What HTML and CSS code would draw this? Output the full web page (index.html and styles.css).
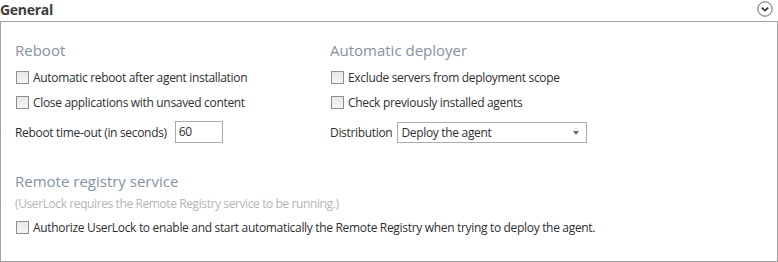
FILE: index.html
```html
<!DOCTYPE html>
<html>
<head>
<meta charset="utf-8">
<link rel="stylesheet" href="styles.css">
</head>
<body>
<div class="header">
  <span class="title">General</span>
  <svg class="toggle" width="16" height="16" viewBox="0 0 16 16">
    <circle cx="8" cy="8" r="7.2" fill="#fff" stroke="#6a6a6a" stroke-width="1"/>
    <path d="M4.8 6.6 L8 9.6 L11.2 6.6" fill="none" stroke="#333" stroke-width="1.8"/>
  </svg>
</div>
<div class="panel">
  <div class="columns">
    <div class="col col-left">
      <div class="heading">Reboot</div>
      <label class="check"><span class="box"></span>Automatic reboot after agent installation</label>
      <label class="check"><span class="box"></span>Close applications with unsaved content</label>
      <div class="field"><span class="label label-timeout">Reboot time-out (in seconds)</span><span class="input">60</span></div>
    </div>
    <div class="col">
      <div class="heading">Automatic deployer</div>
      <label class="check"><span class="box"></span>Exclude servers from deployment scope</label>
      <label class="check"><span class="box"></span>Check previously installed agents</label>
      <div class="field"><span class="label label-dist">Distribution</span><span class="select">Deploy the agent<span class="caret"></span></span></div>
    </div>
  </div>
  <div class="heading heading-remote">Remote registry service</div>
  <div class="note">(UserLock requires the Remote Registry service to be running.)</div>
  <label class="check check-remote"><span class="box"></span>Authorize UserLock to enable and start automatically the Remote Registry when trying to deploy the agent.</label>
</div>
</body>
</html>
```

FILE: styles.css
```css
html, body {
  margin: 0;
  padding: 0;
  background: #fff;
}
body {
  font-family: "Open Sans", "Noto Sans", sans-serif;
  font-size: 12px;
  color: #2f2f2f;
  width: 778px;
  height: 262px;
  overflow: hidden;
}
.header {
  height: 21px;
  display: flex;
  align-items: center;
  justify-content: space-between;
  padding-right: 5px;
}
.title {
  font-weight: bold;
  font-size: 14px;
  color: #3d3d3d;
  letter-spacing: -0.3px;
  margin-top: -3px;
}
.toggle {
  margin-top: -4px;
}
.panel {
  box-sizing: border-box;
  width: 778px;
  height: 241px;
  border: 1px solid #a0a0a0;
  padding: 18px 14px 0 14px;
}
.columns {
  display: grid;
  grid-template-columns: 315px 1fr;
}
.heading {
  font-size: 15px;
  line-height: 20px;
  color: #8593a1;
  margin-bottom: 5px;
}
.check {
  display: flex;
  align-items: center;
  height: 25px;
  padding-left: 1px;
  letter-spacing: -0.32px;
}
.box {
  box-sizing: border-box;
  width: 13px;
  height: 13px;
  border: 1px solid #8e8e8e;
  background: linear-gradient(#e8e8e8, #f6f6f6);
  margin-right: 4px;
  flex: none;
}
.field {
  display: flex;
  align-items: center;
  margin-top: 6px;
  height: 22px;
  letter-spacing: -0.32px;
}
.label-timeout {
  margin-right: 8px;
}
.label-dist {
  margin-right: 5px;
}
.input {
  box-sizing: border-box;
  width: 48px;
  height: 22px;
  border: 1px solid #acacac;
  padding-left: 3px;
  line-height: 20px;
}
.select {
  box-sizing: border-box;
  position: relative;
  width: 190px;
  height: 21px;
  border: 1px solid #acacac;
  padding-left: 3px;
  line-height: 19px;
}
.caret {
  position: absolute;
  right: 7px;
  top: 8px;
  width: 0;
  height: 0;
  border-left: 3.5px solid transparent;
  border-right: 3.5px solid transparent;
  border-top: 4px solid #6a6a6a;
}
.heading-remote {
  margin-top: 28px;
  margin-bottom: 5px;
}
.note {
  line-height: 16px;
  color: #b5b5b5;
  letter-spacing: -0.4px;
  margin-bottom: 3px;
}
```
